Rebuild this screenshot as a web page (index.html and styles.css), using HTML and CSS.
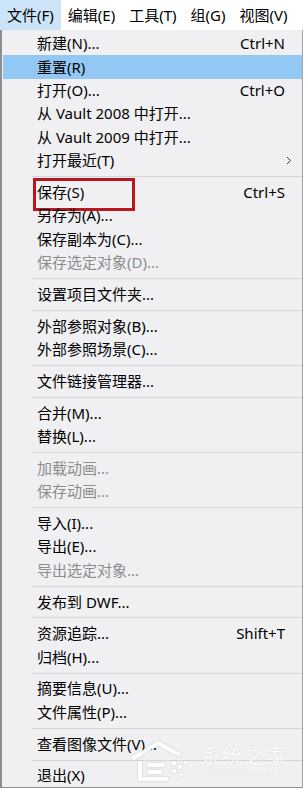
FILE: index.html
```html
<!DOCTYPE html>
<html lang="zh-CN">
<head>
<meta charset="utf-8">
<link rel="stylesheet" href="styles.css">
</head>
<body>
<div class="screen">
  <div class="menubar">
    <span class="mb-item active">文件(F)</span>
    <span class="mb-item">编辑(E)</span>
    <span class="mb-item">工具(T)</span>
    <span class="mb-item">组(G)</span>
    <span class="mb-item">视图(V)</span>
  </div>
  <div class="dropdown">
    <div class="row"><span class="label">新建(N)...</span><span class="key">Ctrl+N</span></div>
    <div class="row hl"><span class="label">重置(R)</span></div>
    <div class="row"><span class="label">打开(O)...</span><span class="key">Ctrl+O</span></div>
    <div class="row"><span class="label">从 Vault 2008 中打开...</span></div>
    <div class="row"><span class="label">从 Vault 2009 中打开...</span></div>
    <div class="row"><span class="label">打开最近(T)</span><svg class="arrow" width="6" height="9" viewBox="0 0 6 9"><path d="M1 1 L4.5 4.5 L1 8" fill="none" stroke="#333" stroke-width="1"/></svg></div>
    <div class="sep"></div>
    <div class="row mark"><span class="label">保存(S)</span><span class="key">Ctrl+S</span><span class="redbox"></span></div>
    <div class="row"><span class="label">另存为(A)...</span></div>
    <div class="row"><span class="label">保存副本为(C)...</span></div>
    <div class="row off"><span class="label">保存选定对象(D)...</span></div>
    <div class="sep"></div>
    <div class="row"><span class="label">设置项目文件夹...</span></div>
    <div class="sep"></div>
    <div class="row"><span class="label">外部参照对象(B)...</span></div>
    <div class="row"><span class="label">外部参照场景(C)...</span></div>
    <div class="sep"></div>
    <div class="row"><span class="label">文件链接管理器...</span></div>
    <div class="sep"></div>
    <div class="row"><span class="label">合并(M)...</span></div>
    <div class="row"><span class="label">替换(L)...</span></div>
    <div class="sep"></div>
    <div class="row off"><span class="label">加载动画...</span></div>
    <div class="row off"><span class="label">保存动画...</span></div>
    <div class="sep"></div>
    <div class="row"><span class="label">导入(I)...</span></div>
    <div class="row"><span class="label">导出(E)...</span></div>
    <div class="row off"><span class="label">导出选定对象...</span></div>
    <div class="sep"></div>
    <div class="row"><span class="label">发布到 DWF...</span></div>
    <div class="sep"></div>
    <div class="row"><span class="label">资源追踪...</span><span class="key">Shift+T</span></div>
    <div class="row"><span class="label">归档(H)...</span></div>
    <div class="sep"></div>
    <div class="row"><span class="label">摘要信息(U)...</span></div>
    <div class="row"><span class="label">文件属性(P)...</span></div>
    <div class="sep"></div>
    <div class="row"><span class="label">查看图像文件(V)...</span></div>
    <div class="sep"></div>
    <div class="row"><span class="label">退出(X)</span></div>
  </div>
  <div class="watermark">
    <svg class="wm-logo" width="70" height="46" viewBox="0 0 70 46">
      <g fill="none" stroke="#ffffff" stroke-width="4" stroke-linejoin="miter">
        <path d="M4 22 L30 6 L52 18"/>
        <path d="M12 24 L12 42 L40 42"/>
        <path d="M20 28 L36 28"/>
        <path d="M20 35 L34 35"/>
      </g>
      <g fill="#ffffff">
        <rect x="44" y="24" width="4" height="4"/>
        <rect x="50" y="28" width="4" height="4"/>
        <rect x="44" y="32" width="4" height="4"/>
        <rect x="56" y="24" width="3" height="3"/>
        <rect x="52" y="36" width="3" height="3"/>
      </g>
    </svg>
    <div class="wm-text">
      <span class="wm-cn">系统之家</span>
      <span class="wm-en">XITONGZHIJIA.NET</span>
    </div>
  </div>
</div>
</body>
</html>
```

FILE: styles.css
```css
html, body {
  margin: 0;
  padding: 0;
  background: #ffffff;
}

.screen {
  position: relative;
  width: 305px;
  height: 789px;
  overflow: hidden;
  font-family: "Noto Sans", "Noto Sans CJK SC", sans-serif;
  font-size: 15px;
  color: #000000;
}

.menubar {
  display: flex;
  height: 30px;
  background: #ffffff;
  align-items: stretch;
}

.mb-item {
  display: flex;
  align-items: center;
  padding: 0 7px;
  margin-right: 0;
  line-height: 1;
}

.mb-item.active {
  background: #cce4f7;
}

.dropdown {
  width: 303px;
  height: 758px;
  box-sizing: border-box;
  background: #f0f0f2;
  border-left: 2px solid #8e8e8e;
  border-right: 1px solid #a4a4a4;
  border-bottom: 1px solid #8e8e8e;
  padding-top: 2px;
  display: flex;
  flex-direction: column;
}

.row {
  position: relative;
  height: 23.4px;
  flex: none;
  display: flex;
  align-items: center;
  margin: 0 0 0 1px;
  line-height: 1;
}

.row .label {
  padding-left: 34px;
  flex: 1;
  white-space: nowrap;
}

.row .key {
  padding-right: 17px;
  white-space: nowrap;
}

.row.hl {
  background: #93c8f4;
}

.row.off {
  color: #8c8c8c;
}

.arrow {
  margin-right: 10px;
}

.sep {
  flex: none;
  height: 8.4px;
  display: flex;
  align-items: center;
  padding-left: 30px;
}

.sep::before {
  content: "";
  display: block;
  flex: 1;
  height: 1px;
  background: #d6d6d6;
}

.redbox {
  position: absolute;
  left: 30px;
  top: -3px;
  width: 102px;
  height: 33px;
  box-sizing: border-box;
  border: 3px solid #b8171d;
}

.watermark {
  position: absolute;
  left: 128px;
  top: 737px;
  display: flex;
  align-items: center;
  gap: 2px;
  opacity: 0.9;
}

.wm-logo {
  filter: drop-shadow(0 0 1px rgba(0, 0, 0, 0.18));
}

.wm-text {
  display: flex;
  flex-direction: column;
  align-items: center;
  gap: 4px;
  margin-top: 2px;
}

.wm-cn {
  color: #ffffff;
  font-size: 21px;
  line-height: 20px;
  height: 20px;
  overflow: visible;
  letter-spacing: 1px;
  text-shadow: 0 0 1px rgba(0, 0, 0, 0.22);
}

.wm-en {
  color: #ffffff;
  font-family: "Liberation Serif", serif;
  font-size: 7px;
  line-height: 8px;
  letter-spacing: 0.5px;
  text-shadow: 0 0 1px rgba(0, 0, 0, 0.25);
}
```
